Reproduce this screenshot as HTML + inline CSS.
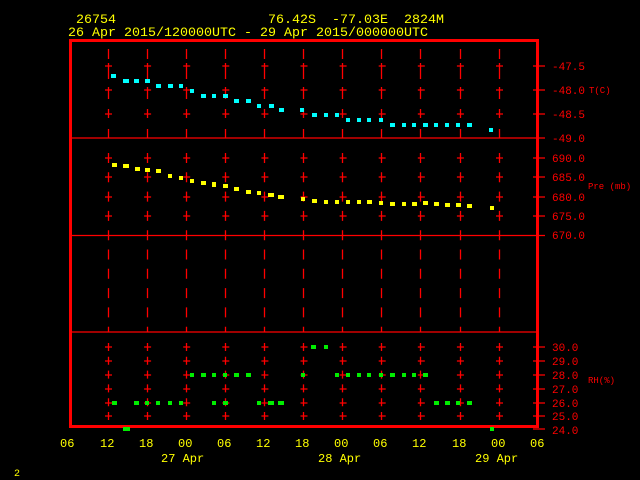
<!DOCTYPE html>
<html><head><meta charset="utf-8"><style>
html,body{margin:0;padding:0;background:#000;width:640px;height:480px;overflow:hidden}
svg{display:block}
text{font-family:"Liberation Mono",monospace}
</style></head><body>
<svg width="640" height="480" viewBox="0 0 640 480" xmlns="http://www.w3.org/2000/svg">
<g fill="#ffff00" font-size="13">
<text x="76" y="23" textLength="40" lengthAdjust="spacingAndGlyphs">26754</text>
<text x="268" y="23" xml:space="preserve" textLength="176" lengthAdjust="spacingAndGlyphs">76.42S  -77.03E  2824M</text>
<text x="68" y="36" textLength="360" lengthAdjust="spacingAndGlyphs">26 Apr 2015/120000UTC - 29 Apr 2015/000000UTC</text>
</g>
<g stroke="#ff0000" stroke-width="1.3">
<g stroke-dasharray="10 4 16 8 12 10 9 11 9 20">
<path d="M108.5 49V138M147.5 49V138M186.5 49V138M225.5 49V138M264.5 49V138M303.5 49V138M342.5 49V138M381.5 49V138M420.5 49V138M460.5 49V138M499.5 49V138"/>
</g>
<g stroke-dasharray="10 9.3">
<path d="M108.5 153V332M147.5 153V332M186.5 153V332M225.5 153V332M264.5 153V332M303.5 153V332M342.5 153V332M381.5 153V332M420.5 153V332M460.5 153V332M499.5 153V332"/>
</g>
<g stroke-dasharray="8 5.8">
<path d="M108.5 343V425M147.5 343V425M186.5 343V425M225.5 343V425M264.5 343V425M303.5 343V425M342.5 343V425M381.5 343V425M420.5 343V425M460.5 343V425M499.5 343V425"/>
</g>
<g stroke-dasharray="7 32.1">
<path d="M105 66H504M105 90H504M105 114H504M105 158H504M105 177H504M105 197H504M105 216H504M105 347H504M105 361H504M105 375H504M105 389H504M105 403H504M105 416H504"/>
</g>
<path d="M70 138H545M70 332H539M70 235.5H545"/>
<path d="M533 66H545M533 90H545M533 114H545M533 158H545M533 177H545M533 197H545M533 216H545M533 347H545M533 361H545M533 375H545M533 389H545M533 403H545M533 416H545M533 429H545"/>
</g>
<rect x="70.5" y="40.5" width="467" height="386" fill="none" stroke="#ff0000" stroke-width="3"/>
<g fill="#ff0000" font-size="11">
<text x="552" y="70">-47.5</text>
<text x="552" y="94">-48.0</text>
<text x="552" y="118">-48.5</text>
<text x="552" y="142">-49.0</text>
<text x="552" y="162">690.0</text>
<text x="552" y="181">685.0</text>
<text x="552" y="201">680.0</text>
<text x="552" y="220">675.0</text>
<text x="552" y="239">670.0</text>
<text x="552" y="351">30.0</text>
<text x="552" y="365">29.0</text>
<text x="552" y="379">28.0</text>
<text x="552" y="393">27.0</text>
<text x="552" y="407">26.0</text>
<text x="552" y="420">25.0</text>
<text x="552" y="434">24.0</text>
</g>
<g fill="#ff0000" font-size="9">
<text x="589" y="93">T(C)</text>
<text x="588" y="189" xml:space="preserve">Pre (mb)</text>
<text x="588" y="383">RH(%)</text>
</g>
<g fill="#00ffff">
<rect x="111" y="74" width="5" height="4"/><rect x="123" y="79" width="6" height="4"/><rect x="134" y="79" width="5" height="4"/><rect x="145" y="79" width="5" height="4"/>
<rect x="156" y="84" width="5" height="4"/><rect x="168" y="84" width="5" height="4"/><rect x="179" y="84" width="4" height="4"/><rect x="190" y="89" width="4" height="4"/>
<rect x="201" y="94" width="5" height="4"/><rect x="212" y="94" width="4" height="4"/><rect x="223" y="94" width="5" height="4"/><rect x="234" y="99" width="5" height="4"/>
<rect x="246" y="99" width="5" height="4"/><rect x="257" y="104" width="4" height="4"/><rect x="269" y="104" width="5" height="4"/><rect x="279" y="108" width="5" height="4"/>
<rect x="300" y="108" width="4" height="4"/><rect x="312" y="113" width="5" height="4"/><rect x="324" y="113" width="4" height="4"/><rect x="335" y="113" width="4" height="4"/>
<rect x="346" y="118" width="4" height="4"/><rect x="357" y="118" width="4" height="4"/><rect x="367" y="118" width="4" height="4"/><rect x="379" y="118" width="4" height="4"/>
<rect x="390" y="123" width="5" height="4"/><rect x="402" y="123" width="4" height="4"/><rect x="412" y="123" width="4" height="4"/><rect x="423" y="123" width="5" height="4"/>
<rect x="434" y="123" width="4" height="4"/><rect x="445" y="123" width="4" height="4"/><rect x="456" y="123" width="4" height="4"/><rect x="467" y="123" width="5" height="4"/>
<rect x="489" y="128" width="4" height="4"/>
</g>
<g fill="#ffff00">
<rect x="112" y="163" width="5" height="4"/><rect x="123" y="164" width="6" height="4"/><rect x="135" y="167" width="5" height="4"/><rect x="145" y="168" width="5" height="4"/>
<rect x="156" y="169" width="5" height="4"/><rect x="168" y="174" width="4" height="4"/><rect x="179" y="176" width="4" height="4"/><rect x="190" y="179" width="4" height="4"/>
<rect x="201" y="181" width="5" height="4"/><rect x="212" y="182" width="4" height="5"/><rect x="223" y="184" width="5" height="4"/><rect x="234" y="187" width="5" height="4"/>
<rect x="246" y="190" width="5" height="4"/><rect x="257" y="191" width="4" height="4"/><rect x="268" y="193" width="6" height="4"/><rect x="278" y="195" width="6" height="4"/>
<rect x="301" y="197" width="4" height="4"/><rect x="312" y="199" width="5" height="4"/><rect x="324" y="200" width="4" height="4"/><rect x="335" y="200" width="4" height="4"/>
<rect x="346" y="200" width="4" height="4"/><rect x="357" y="200" width="4" height="4"/><rect x="367" y="200" width="5" height="4"/><rect x="379" y="201" width="4" height="4"/>
<rect x="390" y="202" width="5" height="4"/><rect x="402" y="202" width="4" height="4"/><rect x="412" y="202" width="5" height="4"/><rect x="423" y="201" width="5" height="4"/>
<rect x="434" y="202" width="5" height="4"/><rect x="445" y="203" width="5" height="4"/><rect x="456" y="203" width="5" height="4"/><rect x="467" y="204" width="5" height="4"/>
<rect x="490" y="206" width="4" height="4"/>
</g>
<g fill="#00ee00">
<rect x="311" y="345" width="5" height="4"/><rect x="324" y="345" width="4" height="4"/>
<rect x="190" y="373" width="4" height="4"/><rect x="201" y="373" width="5" height="4"/><rect x="212" y="373" width="4" height="4"/><rect x="223" y="373" width="4" height="4"/><rect x="234" y="373" width="5" height="4"/><rect x="246" y="373" width="5" height="4"/>
<rect x="301" y="373" width="4" height="4"/><rect x="335" y="373" width="4" height="4"/><rect x="346" y="373" width="4" height="4"/><rect x="357" y="373" width="4" height="4"/><rect x="367" y="373" width="4" height="4"/><rect x="379" y="373" width="4" height="4"/><rect x="390" y="373" width="5" height="4"/><rect x="402" y="373" width="4" height="4"/><rect x="412" y="373" width="4" height="4"/><rect x="423" y="373" width="5" height="4"/>
<rect x="112" y="401" width="5" height="4"/><rect x="134" y="401" width="5" height="4"/><rect x="145" y="401" width="4" height="4"/><rect x="156" y="401" width="4" height="4"/><rect x="168" y="401" width="4" height="4"/><rect x="179" y="401" width="4" height="4"/>
<rect x="212" y="401" width="4" height="4"/><rect x="223" y="401" width="5" height="4"/>
<rect x="257" y="401" width="4" height="4"/><rect x="268" y="401" width="6" height="4"/><rect x="278" y="401" width="6" height="4"/>
<rect x="434" y="401" width="5" height="4"/><rect x="445" y="401" width="5" height="4"/><rect x="456" y="401" width="4" height="4"/><rect x="467" y="401" width="5" height="4"/>
<rect x="123" y="427" width="7" height="4"/><rect x="490" y="427" width="4" height="4"/>
</g>
<g fill="#ffff00" font-size="12">
<text x="60" y="447">06</text><text x="100" y="447">12</text><text x="139" y="447">18</text><text x="178" y="447">00</text><text x="217" y="447">06</text><text x="256" y="447">12</text><text x="295" y="447">18</text><text x="334" y="447">00</text><text x="373" y="447">06</text><text x="412" y="447">12</text><text x="452" y="447">18</text><text x="491" y="447">00</text><text x="530" y="447">06</text>
<text x="161" y="462" xml:space="preserve">27 Apr</text><text x="318" y="462" xml:space="preserve">28 Apr</text><text x="475" y="462" xml:space="preserve">29 Apr</text>
<text x="14" y="476" font-size="10">2</text>
</g>
</svg>
</body></html>
